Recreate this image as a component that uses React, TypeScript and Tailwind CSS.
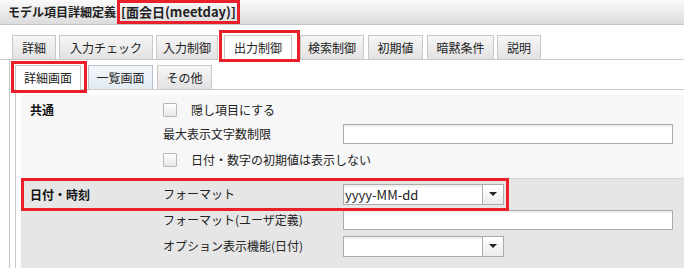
import React from 'react';

const font = { fontFamily: '"Noto Sans CJK JP", "Liberation Sans", sans-serif' };

const tabs = [
  { label: '詳細', cls: 'ml-[12px] w-[44px]' },
  { label: '入力チェック', cls: 'ml-[3px] w-[94px]' },
  { label: '入力制御', cls: 'ml-[3px] w-[62px]' },
  { label: '出力制御', cls: 'ml-[6px] w-[68px]', active: true },
  { label: '検索制御', cls: 'ml-[8px] w-[64px]' },
  { label: '初期値', cls: 'ml-[4px] w-[55px]' },
  { label: '暗黙条件', cls: 'ml-[4px] w-[67px]' },
  { label: '説明', cls: 'ml-[3px] w-[44px]' },
];

function Checkbox() {
  return (
    <span className="inline-block w-[14px] h-[14px] border border-[#b8b8b8] bg-gradient-to-b from-white to-[#e6e6e6] rounded-[1px] mr-[14px]" />
  );
}

function TextInput() {
  return (
    <div className="w-[330px] h-[20px] border border-[#acacac] bg-white shadow-[inset_0_3px_2px_-1px_rgba(0,0,0,0.07)]" />
  );
}

function Select({ value }: { value?: string }) {
  return (
    <div className="flex w-[161px] h-[21px] border border-[#acacac] bg-white shadow-[inset_0_3px_2px_-1px_rgba(0,0,0,0.07)]">
      <div className="flex-1 flex items-center pl-[1px] text-[13px] text-[#222] leading-none">{value}</div>
      <div className="w-[21px] border-l border-[#acacac] bg-gradient-to-b from-white to-[#ececec] flex items-center justify-center">
        <span className="w-0 h-0 border-l-[4px] border-r-[4px] border-t-[4px] border-l-transparent border-r-transparent border-t-[#222]" />
      </div>
    </div>
  );
}

export default function App() {
  return (
    <div className="w-[684px] h-[268px] overflow-hidden bg-white text-[12px] text-[#222]" style={font}>
      {/* title */}
      <div className="h-[25px] border-b border-[#c4c4c4] bg-gradient-to-b from-[#fafafa] to-[#dcdcdc] flex items-center pl-[8px]">
        <span className="font-bold text-[12px] text-[#222]">モデル項目詳細定義</span>
        <span className="ml-[1px] h-[24px] inline-flex items-center border-[3px] border-[#e8202a] pl-[1px] pr-[1px] font-bold text-[13px] text-[#222]">
          [面会日(meetday)]
        </span>
      </div>

      {/* tabs */}
      <div className="flex pt-[10px] border-b border-[#c8c8c8] h-[35px] items-end">
        {tabs.map(t => (
          <div
            key={t.label}
            className={
              t.active
                ? `relative ${t.cls} h-[25px] -mb-px border border-b-0 border-[#c8c8c8] bg-white flex items-center justify-center`
                : `${t.cls} h-[24px] border border-b-0 border-[#c8c8c8] bg-gradient-to-b from-[#f6f6f6] to-[#e2e2e2] flex items-center justify-center`
            }
          >
            {t.label}
            {t.active && (
              <span className="absolute left-[-6px] top-[-6px] w-[81px] h-[32px] border-[3px] border-[#e8202a]" />
            )}
          </div>
        ))}
      </div>

      {/* outer panel */}
      <div className="ml-[9px] border-l border-[#c8c8c8] h-[220px]">
        {/* sub tabs */}
        <div className="flex pl-[5px] pt-[5px] border-b border-[#c8c8c8] h-[30px] items-end">
          <div className="relative w-[66px] h-[25px] -mb-px border border-b-0 border-[#c8c8c8] bg-white flex items-center justify-center">
            詳細画面
            <span className="absolute left-[-5px] top-[-5px] w-[76px] h-[32px] border-[3px] border-[#e8202a]" />
          </div>
          <div className="ml-[7px] w-[65px] h-[24px] border border-b-0 border-[#b3c0cf] bg-gradient-to-b from-[#f3f6fa] to-[#e3eaf2] flex items-center justify-center">
            一覧画面
          </div>
          <div className="ml-[4px] w-[55px] h-[24px] border border-b-0 border-[#c8c8c8] bg-gradient-to-b from-[#f6f6f6] to-[#e2e2e2] flex items-center justify-center">
            その他
          </div>
        </div>

        {/* inner panel */}
        <div className="ml-[5px] border-l border-[#c8c8c8] pl-[5px] pt-[5px] h-[200px]">
          {/* 共通 */}
          <div className="flex bg-[#f7f7f7] pt-[3px] pb-[6px]">
            <div className="w-[142px] pl-[9px] pt-[3px] font-bold text-[#111]">共通</div>
            <div className="flex flex-col">
              <div className="h-[24px] flex items-center">
                <Checkbox />
                <span>隠し項目にする</span>
              </div>
              <div className="h-[24px] flex items-center">
                <span className="w-[180px]">最大表示文字数制限</span>
                <TextInput />
              </div>
              <div className="h-[24px] mt-[2px] flex items-center">
                <Checkbox />
                <span>日付・数字の初期値は表示しない</span>
              </div>
            </div>
          </div>

          {/* 日付・時刻 */}
          <div className="relative flex bg-[#e6e6e6] border-t border-[#d6d6d6] pt-[2px] h-[100px]">
            <div className="w-[142px] pl-[9px] pt-[5px] font-bold text-[#111]">日付・時刻</div>
            <div className="flex flex-col">
              <div className="h-[26px] flex items-center">
                <span className="w-[180px]">フォーマット</span>
                <Select value="yyyy-MM-dd" />
              </div>
              <div className="h-[26px] flex items-center">
                <span className="w-[180px]">フォーマット(ユーザ定義)</span>
                <TextInput />
              </div>
              <div className="h-[26px] flex items-center">
                <span className="w-[180px]">オプション表示機能(日付)</span>
                <Select />
              </div>
            </div>
            <span className="absolute left-0 top-[-1px] w-[488px] h-[33px] border-[3px] border-[#e8202a]" />
          </div>
        </div>
      </div>
    </div>
  );
}
